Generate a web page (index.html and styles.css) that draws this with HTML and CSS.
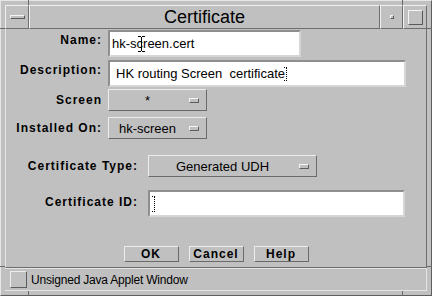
FILE: index.html
```html
<!DOCTYPE html>
<html lang="en">
<head>
    <meta charset="UTF-8">
    <title>Certificate</title>
    <link rel="stylesheet" href="styles.css">
</head>
<body>
    <div class="window">
        <span class="tick tick-t1"></span>
        <span class="tick tick-t2"></span>
        <span class="tick tick-l1"></span>
        <span class="tick tick-l2"></span>
        <span class="tick tick-r1"></span>
        <span class="tick tick-r2"></span>
        <span class="tick tick-b1"></span>
        <span class="tick tick-b2"></span>

        <div class="titlebar">
            <div class="tb tb-menu"><span class="menu-bar"></span></div>
            <div class="tb tb-title">Certificate</div>
            <div class="tb tb-min"><span class="min-dot"></span></div>
            <div class="tb tb-max"><span class="max-box"></span></div>
        </div>

        <div class="client">
            <div class="group top">
                <div class="row row-name">
                    <span class="lbl up">Name:</span>
                    <div class="field w-name">hk-screen.cert
                        <svg class="ibeam" width="9" height="18" viewBox="0 0 9 18">
                            <path d="M1 1.5H4M5 1.5H8M4.5 2V16M1 16.5H4M5 16.5H8" stroke="#000" stroke-width="1" fill="none"/>
                        </svg>
                    </div>
                </div>
                <div class="row row-desc">
                    <span class="lbl up">Description:</span>
                    <div class="field w-desc pad-desc">HK routing Screen&nbsp; certificate<svg class="caret" width="5" height="14" viewBox="0 0 5 14">
                            <path d="M0 0.5H4M2.5 1V13M0 13.5H4" stroke="#000" stroke-width="1" stroke-dasharray="1 1" fill="none"/>
                        </svg></div>
                </div>
                <div class="row row-screen">
                    <span class="lbl">Screen</span>
                    <div class="option w-small"><span class="opt-text">*</span><span class="opt-ind"></span></div>
                </div>
                <div class="row row-inst">
                    <span class="lbl">Installed On:</span>
                    <div class="option w-small"><span class="opt-text">hk-screen</span><span class="opt-ind"></span></div>
                </div>
            </div>

            <div class="group bottom">
                <div class="row row-type">
                    <span class="lbl">Certificate Type:</span>
                    <div class="option w-type"><span class="opt-text">Generated UDH</span><span class="opt-ind"></span></div>
                </div>
                <div class="row row-id">
                    <span class="lbl up-small">Certificate ID:</span>
                    <div class="field w-id pad-id"><svg class="caret" width="5" height="16" viewBox="0 0 5 16">
                            <path d="M0 0.5H4M2.5 1V15M0 15.5H4" stroke="#000" stroke-width="1" stroke-dasharray="1 1" fill="none"/>
                        </svg></div>
                </div>
            </div>

            <div class="buttons">
                <button class="btn">OK</button>
                <button class="btn">Cancel</button>
                <button class="btn">Help</button>
            </div>
        </div>

        <div class="statusbar">
            <span class="status-box"></span>
            <span class="status-text">Unsigned Java Applet Window</span>
        </div>
    </div>
</body>
</html>
```

FILE: styles.css
```css
body {
    margin: 0;
    font-family: "Liberation Sans", Arial, sans-serif;
    background-color: #c0c0c0;
    color: #000;
}
.window {
    position: relative;
    width: 432px;
    height: 296px;
    box-sizing: border-box;
    background-color: #c0c0c0;
    border: 1px solid;
    border-color: #e6e6e6 #5e5e5e #5e5e5e #e6e6e6;
    padding: 4px;
    display: flex;
    flex-direction: column;
}

/* resize handle marks on the frame */
.tick {
    position: absolute;
    background-color: #6a6a6a;
}
.tick-t1, .tick-t2, .tick-b1, .tick-b2 {
    width: 1px;
    height: 5px;
}
.tick-l1, .tick-l2, .tick-r1, .tick-r2 {
    width: 5px;
    height: 1px;
}
.tick-t1 { top: -1px; left: 27px; }
.tick-t2 { top: -1px; left: 401px; }
.tick-b1 { bottom: -1px; left: 27px; }
.tick-b2 { bottom: -1px; left: 401px; }
.tick-l1 { left: -1px; top: 27px; }
.tick-l2 { left: -1px; top: 265px; }
.tick-r1 { right: -1px; top: 27px; }
.tick-r2 { right: -1px; top: 265px; }

.titlebar {
    display: flex;
    height: 24px;
    flex: none;
}
.tb {
    box-sizing: border-box;
    border: 1px solid;
    border-color: #f0f0f0 #6e6e6e #6e6e6e #f0f0f0;
    display: flex;
    align-items: center;
    justify-content: center;
}
.tb-menu {
    width: 24px;
}
.tb-title {
    flex: 1;
    font-size: 18px;
}
.tb-min {
    width: 23px;
}
.tb-max {
    width: 24px;
}
.menu-bar {
    width: 15px;
    height: 4px;
    box-sizing: border-box;
    border: 1px solid;
    border-color: #f4f4f4 #5a5a5a #5a5a5a #f4f4f4;
}
.min-dot {
    width: 4px;
    height: 4px;
    box-sizing: border-box;
    border: 1px solid;
    border-color: #f4f4f4 #5a5a5a #5a5a5a #f4f4f4;
}
.max-box {
    width: 15px;
    height: 15px;
    box-sizing: border-box;
    border: 1px solid;
    border-color: #f4f4f4 #5a5a5a #5a5a5a #f4f4f4;
}

.client {
    flex: 1;
    box-sizing: border-box;
    border-left: 1px solid #e4e4e4;
    border-right: 1px solid #6e6e6e;
    border-bottom: 1px solid #6e6e6e;
    display: flex;
    flex-direction: column;
}
.row {
    display: flex;
    align-items: center;
}
.lbl {
    flex: none;
    font-weight: bold;
    font-size: 12px;
    letter-spacing: 1px;
    text-align: right;
    line-height: 14px;
}
.lbl.up {
    padding-bottom: 7px;
}
.lbl.up-small {
    padding-bottom: 3px;
}
.top .lbl {
    width: 96px;
    margin-right: 6px;
}
.bottom .lbl {
    width: 132px;
    margin-right: 10px;
}

.row-name { margin-top: 1px; }
.row-desc { margin-top: 3px; }
.row-screen { margin-top: 2px; }
.row-inst { margin-top: 6px; }
.row-type { margin-top: 16px; }
.row-id { margin-top: 13px; }

.field {
    position: relative;
    box-sizing: border-box;
    height: 27px;
    background-color: #fff;
    border: 2px solid;
    border-color: #8e8e8e #d6d6d6 #d6d6d6 #8e8e8e;
    padding-left: 2px;
    font-size: 13px;
    display: flex;
    align-items: center;
    white-space: nowrap;
}
.pad-desc {
    padding-left: 6px;
}
.pad-id {
    padding-left: 3px;
}
.w-name { width: 193px; }
.w-desc { width: 298px; }
.w-id { width: 257px; }
.ibeam {
    position: absolute;
    left: 27px;
    top: 3px;
}
.caret {
    margin-left: -1px;
}

.option {
    box-sizing: border-box;
    height: 22px;
    border: 1px solid;
    border-color: #ececec #6a6a6a #6a6a6a #ececec;
    display: flex;
    align-items: center;
    font-size: 13px;
}
.w-small { width: 99px; }
.w-type { width: 169px; }
.opt-text {
    flex: 1;
    text-align: center;
    margin-right: 3px;
}
.opt-ind {
    width: 10px;
    height: 5px;
    box-sizing: border-box;
    border: 1px solid;
    border-color: #f4f4f4 #5e5e5e #5e5e5e #f4f4f4;
    margin-right: 7px;
}

.buttons {
    display: flex;
    justify-content: center;
    gap: 10px;
    margin-top: 29px;
}
.btn {
    width: 55px;
    height: 16px;
    box-sizing: border-box;
    padding: 0;
    background-color: #c0c0c0;
    border: 1px solid;
    border-color: #ececec #6a6a6a #6a6a6a #ececec;
    font-family: "Liberation Sans", Arial, sans-serif;
    font-weight: bold;
    font-size: 12px;
    letter-spacing: 1px;
    color: #000;
    line-height: 14px;
}

.statusbar {
    flex: none;
    height: 23px;
    box-sizing: border-box;
    border-top: 1px solid #e4e4e4;
    border-right: 1px solid #e4e4e4;
    border-bottom: 1px solid #e4e4e4;
    display: flex;
    align-items: center;
    padding-left: 5px;
}
.status-box {
    width: 17px;
    height: 17px;
    box-sizing: border-box;
    border: 1px solid;
    border-color: #ececec #5e5e5e #5e5e5e #ececec;
    margin-right: 4px;
}
.status-text {
    font-size: 12px;
    letter-spacing: -0.2px;
}
```
